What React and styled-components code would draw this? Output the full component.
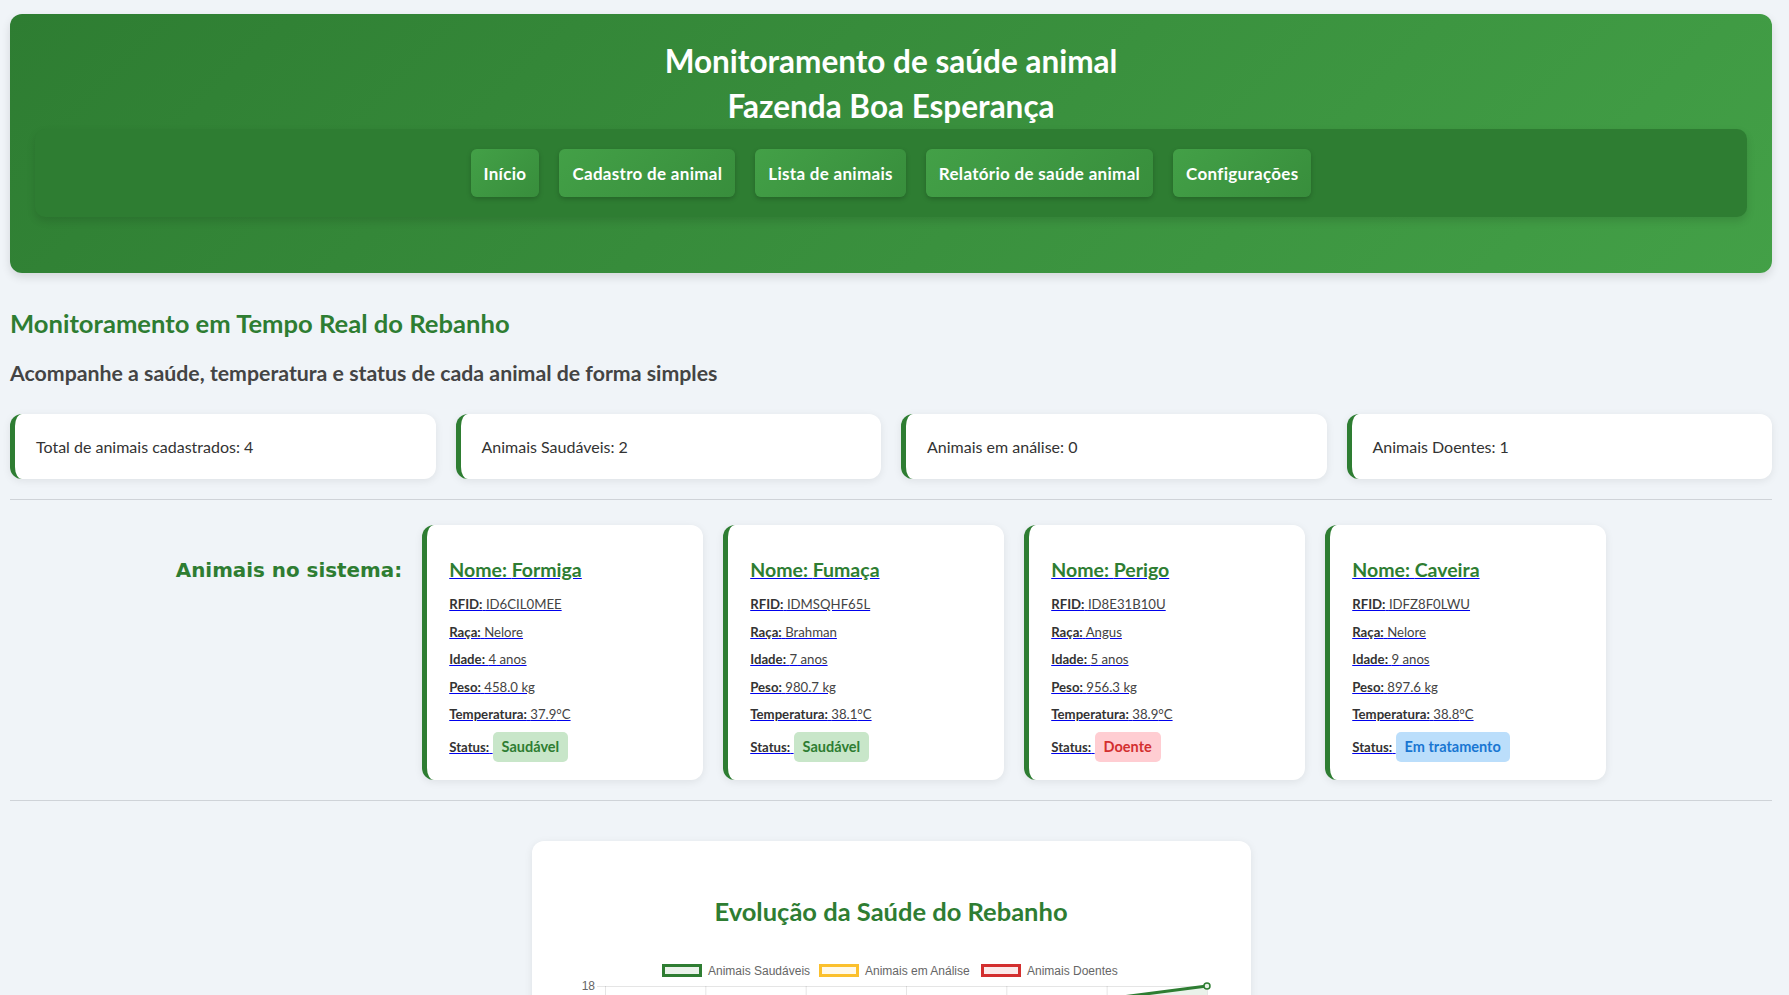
import React from 'react'
import styled, { createGlobalStyle } from 'styled-components'

const GlobalStyle = createGlobalStyle`
    body {
        margin: 0;
        background: #f0f4f8;
        font-family: Lato, "Open Sans", sans-serif;
        color: #333;
    }
`

const stats = [
    'Total de animais cadastrados: 4',
    'Animais Saudáveis: 2',
    'Animais em análise: 0',
    'Animais Doentes: 1',
]

const animals = [
    { nome: 'Formiga', rfid: 'ID6CIL0MEE', raca: 'Nelore', idade: 4, peso: '458.0', temp: '37.9', status: 'Saudável', tone: 'ok' },
    { nome: 'Fumaça', rfid: 'IDMSQHF65L', raca: 'Brahman', idade: 7, peso: '980.7', temp: '38.1', status: 'Saudável', tone: 'ok' },
    { nome: 'Perigo', rfid: 'ID8E31B10U', raca: 'Angus', idade: 5, peso: '956.3', temp: '38.9', status: 'Doente', tone: 'sick' },
    { nome: 'Caveira', rfid: 'IDFZ8F0LWU', raca: 'Nelore', idade: 9, peso: '897.6', temp: '38.8', status: 'Em tratamento', tone: 'care' },
]

const badgeTones = {
    ok: { bg: '#c8e6c9', fg: '#2e7d32' },
    sick: { bg: '#ffcdd2', fg: '#d32f2f' },
    care: { bg: '#bbdefb', fg: '#1976d2' },
}

function HealthChart() {
    const left = 33
    const top = 34
    const step = 100.33
    const unit = 13
    const xs = [0, 1, 2, 3, 4, 5, 6].map(i => left + i * step)
    const y = v => top + (18 - v) * unit
    const healthy = [12, 13, 14, 15, 16, 17, 18]
    const analysis = [3, 2, 2, 1, 1, 0, 0]
    const sick = [2, 2, 1, 1, 1, 1, 1]
    const line = d => d.map((v, i) => `${i ? 'L' : 'M'}${xs[i]},${y(v)}`).join(' ')
    const bottom = y(0)
    const legend = [
        { x: 90, label: 'Animais Saudáveis', stroke: '#2e7d32', fill: 'rgba(46,125,50,0.1)' },
        { x: 247, label: 'Animais em Análise', stroke: '#fbc02d', fill: 'rgba(251,192,45,0.1)' },
        { x: 409, label: 'Animais Doentes', stroke: '#d32f2f', fill: 'rgba(211,47,47,0.1)' },
    ]
    return (
        <svg width="639" height="300" viewBox="0 0 639 300">
            {legend.map(l => (
                <g key={l.label}>
                    <rect x={l.x + 1.5} y="13.5" width="37" height="10" fill={l.fill} stroke={l.stroke} strokeWidth="3" />
                    <text x={l.x + 46} y="22.5" fontFamily="Liberation Sans, Arial, sans-serif" fontSize="12" fill="#666">{l.label}</text>
                </g>
            ))}
            {[18, 16, 14, 12, 10, 8, 6, 4, 2, 0].map(v => (
                <g key={v}>
                    <line x1={left - 8} x2={xs[6]} y1={y(v) + 0.5} y2={y(v) + 0.5} stroke="rgba(0,0,0,0.1)" />
                    <text x="23" y={y(v) + 4} textAnchor="end" fontFamily="Liberation Sans, Arial, sans-serif" fontSize="12" fill="#666">{v}</text>
                </g>
            ))}
            {xs.map(x => (
                <line key={x} x1={x + 0.5} x2={x + 0.5} y1={top} y2={bottom + 8} stroke="rgba(0,0,0,0.1)" />
            ))}
            <path d={`${line(healthy)} L${xs[6]},${bottom} L${xs[0]},${bottom} Z`} fill="rgba(46,125,50,0.1)" />
            <path d={line(healthy)} fill="none" stroke="#2e7d32" strokeWidth="3" />
            <path d={line(analysis)} fill="none" stroke="#fbc02d" strokeWidth="3" />
            <path d={line(sick)} fill="none" stroke="#d32f2f" strokeWidth="3" />
            {healthy.map((v, i) => (
                <circle key={i} cx={xs[i]} cy={y(v)} r="3" fill="#e8f2e8" stroke="#2e7d32" strokeWidth="1.5" />
            ))}
        </svg>
    )
}

function App() {
    return (
        <Page>
            <GlobalStyle />
            <Header>
                <Title>
                    Monitoramento de saúde animal<br />
                    Fazenda Boa Esperança
                </Title>
                <Nav>
                    <NavButton href="#">Início</NavButton>
                    <NavButton href="#">Cadastro de animal</NavButton>
                    <NavButton href="#">Lista de animais</NavButton>
                    <NavButton href="#">Relatório de saúde animal</NavButton>
                    <NavButton href="#">Configurações</NavButton>
                </Nav>
            </Header>

            <SectionTitle>Monitoramento em Tempo Real do Rebanho</SectionTitle>
            <Subtitle>Acompanhe a saúde, temperatura e status de cada animal de forma simples</Subtitle>

            <StatsGrid>
                {stats.map(s => (
                    <StatCard key={s}>{s}</StatCard>
                ))}
            </StatsGrid>

            <Divider />

            <AnimalsRow>
                <RowLabel>Animais no sistema:</RowLabel>
                {animals.map(a => (
                    <AnimalCard href="#" key={a.rfid}>
                        <AnimalName>Nome: {a.nome}</AnimalName>
                        <Detail><b>RFID:</b> {a.rfid}</Detail>
                        <Detail><b>Raça:</b> {a.raca}</Detail>
                        <Detail><b>Idade:</b> {a.idade} anos</Detail>
                        <Detail><b>Peso:</b> {a.peso} kg</Detail>
                        <Detail><b>Temperatura:</b> {a.temp}°C</Detail>
                        <Detail><b>Status:</b> <Badge tone={a.tone}>{a.status}</Badge></Detail>
                    </AnimalCard>
                ))}
            </AnimalsRow>

            <Divider $gap={40} />

            <ChartCard>
                <ChartTitle>Evolução da Saúde do Rebanho</ChartTitle>
                <HealthChart />
            </ChartCard>
        </Page>
    )
}

const Page = styled.div`
    padding: 14px 17px 40px 10px;
`

const Header = styled.header`
    background: linear-gradient(135deg, #2e7d32 0%, #43a047 100%);
    border-radius: 12px;
    padding: 25px 25px 56px;
    box-shadow: 0 4px 10px rgba(0, 0, 0, 0.12);
`

const Title = styled.h1`
    margin: 0;
    text-align: center;
    color: #fff;
    font-size: 31.5px;
    line-height: 45px;
    font-weight: 700;
`

const Nav = styled.nav`
    display: flex;
    justify-content: center;
    gap: 20px;
    padding: 20px;
    background: #2e7d32;
    border-radius: 10px;
    box-shadow: 0 4px 8px rgba(0, 0, 0, 0.12);
`

const NavButton = styled.a`
    display: flex;
    align-items: center;
    height: 48px;
    padding: 0 13px;
    box-sizing: border-box;
    border-radius: 6px;
    background: linear-gradient(135deg, #43a047 0%, #388e3c 100%);
    box-shadow: 0 2px 5px rgba(0, 0, 0, 0.2);
    color: #fff;
    font-size: 17px;
    letter-spacing: 0.3px;
    font-weight: 700;
    text-decoration: none;
`

const SectionTitle = styled.h2`
    margin: 35px 0 0;
    color: #2e7d32;
    font-size: 25.6px;
    line-height: 31px;
    font-weight: 700;
`

const Subtitle = styled.h3`
    margin: 22px 0 0;
    color: #444;
    font-size: 21.3px;
    line-height: 25px;
    font-weight: 700;
`

const StatsGrid = styled.div`
    display: grid;
    grid-template-columns: repeat(4, 1fr);
    gap: 20px;
    margin-top: 28px;
`

const StatCard = styled.div`
    display: flex;
    align-items: center;
    height: 65px;
    box-sizing: border-box;
    padding: 0 21px;
    background: #fff;
    border-left: 5px solid #2e7d32;
    border-radius: 12px;
    box-shadow: 0 2px 8px rgba(0, 0, 0, 0.08);
    font-size: 16px;
    color: #333;
`

const Divider = styled.hr`
    border: none;
    border-top: 1px solid #cfd3d8;
    margin: 20px 0 ${p => p.$gap || 25}px;
`

const AnimalsRow = styled.div`
    display: flex;
    justify-content: center;
    align-items: flex-start;
    gap: 20px;
`

const RowLabel = styled.h2`
    margin: 31px 0 0;
    font-family: "DejaVu Sans", Verdana, sans-serif;
    font-size: 19.9px;
    line-height: 30px;
    color: #2e7d32;
    white-space: nowrap;
`

const AnimalCard = styled.a`
    display: block;
    width: 281px;
    box-sizing: border-box;
    padding: 20px 22px 18px;
    background: #fff;
    border-left: 5px solid #2e7d32;
    border-radius: 12px;
    box-shadow: 0 2px 8px rgba(0, 0, 0, 0.08);
    color: #0000ee;
    text-decoration: underline;
`

const AnimalName = styled.h3`
    margin: 12px 0 13px;
    font-size: 19.5px;
    line-height: 25px;
    color: #2e7d32;
`

const Detail = styled.p`
    margin: 8px 0 0;
    font-size: 13.2px;
    line-height: 19.5px;
    color: #444;
    b {
        color: #333;
    }
    &:last-child {
        margin-top: 7px;
    }
`

const Badge = styled.span`
    display: inline-block;
    padding: 5px 9px;
    line-height: 20px;
    border-radius: 5px;
    font-weight: 700;
    font-size: 14.5px;
    background: ${p => badgeTones[p.tone].bg};
    color: ${p => badgeTones[p.tone].fg};
`

const ChartCard = styled.div`
    width: 719px;
    margin: 0 auto;
    box-sizing: border-box;
    padding: 40px 40px 30px;
    background: #fff;
    border-radius: 12px;
    box-shadow: 0 2px 8px rgba(0, 0, 0, 0.08);
`

const ChartTitle = styled.h2`
    margin: 14px 0 25px;
    text-align: center;
    color: #2e7d32;
    font-size: 25.5px;
    line-height: 32px;
`

export default App
